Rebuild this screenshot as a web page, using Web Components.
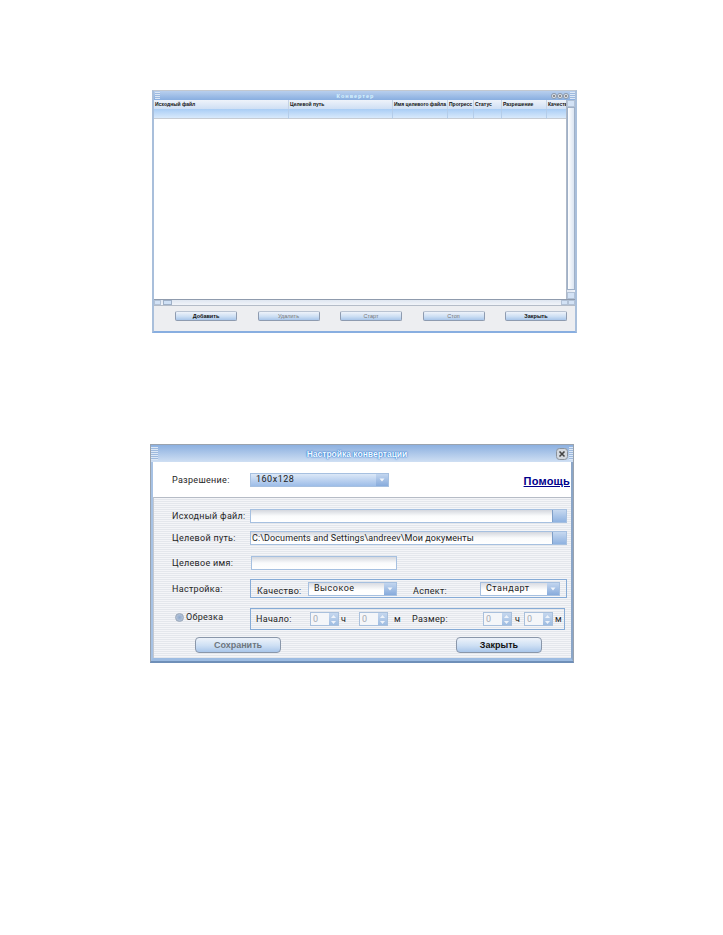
<!DOCTYPE html>
<html lang="ru">
<head>
<meta charset="utf-8">
<title>Настройка конвертации</title>
<style>
    html, body { margin: 0; background: #fff; }
    body { font-family: "Liberation Sans", Arial, sans-serif; color: #222; }
    .page {
        width: 723px;
        height: 935px;
        display: flex;
        flex-direction: column;
        box-sizing: border-box;
        padding-top: 90px;
    }
    .list-wrap { padding-left: 152px; }
    .form-wrap { padding-left: 150px; margin-top: 111px; }
</style>
</head>
<body>
<div class="page">
    <div class="list-wrap">
        <conv-list>
            <conv-button slot="buttons" strong>Добавить</conv-button>
            <conv-button slot="buttons" disabled>Удалить</conv-button>
            <conv-button slot="buttons" disabled>Старт</conv-button>
            <conv-button slot="buttons" disabled>Стоп</conv-button>
            <conv-button slot="buttons" strong>Закрыть</conv-button>
        </conv-list>
    </div>
    <div class="form-wrap">
        <conv-form></conv-form>
    </div>
</div>

<script>
const UI_FONT = `Roboto, "Liberation Sans", sans-serif`;

/** Flat button with a pale blue gradient. Attributes: strong, disabled, big. */
class ConvButton extends HTMLElement {
    constructor() {
        super();
        this.attachShadow({ mode: "open" });
        this.shadowRoot.innerHTML = `
            <style>
                :host {
                    display: flex;
                    align-items: center;
                    justify-content: center;
                    box-sizing: border-box;
                    width: 62px;
                    height: 10px;
                    border: 1px solid #8e9bb0;
                    border-top-color: #b9c3d2;
                    border-radius: 2px;
                    background: linear-gradient(#eef3fa, #cddff4 55%, #a9c6ea);
                    font: bold 5.5px "Liberation Sans", sans-serif;
                    letter-spacing: 0;
                    color: #111;
                }
                :host([disabled]) { font-weight: normal; color: #777; }
                :host([big]) {
                    width: 86px;
                    height: 16px;
                    border-radius: 4px;
                    font-size: 9px;
                    border-color: #8a97aa;
                }
                :host([big][disabled]) { font-weight: bold; color: #6d7680; }
            </style>
            <slot></slot>
        `;
    }
}
customElements.define("conv-button", ConvButton);

/** Small three-button window caption. Attribute: big switches to dialog size. */
class ConvTitlebar extends HTMLElement {
    constructor() {
        super();
        this.attachShadow({ mode: "open" });
        this.shadowRoot.innerHTML = `
            <style>
                :host {
                    display: flex;
                    align-items: center;
                    height: 9px;
                    background: linear-gradient(#b8cfee, #88aee0);
                    color: #d8f3ff;
                    font: bold 5.5px "Liberation Sans", sans-serif;
                    letter-spacing: 1px;
                }
                :host([big]) {
                    height: 17px;
                    background: linear-gradient(#8cb0e0, #cfdff3);
                    font-size: 8.5px;
                    letter-spacing: 0;
                    color: #f2fbff;
                    text-shadow: 0 0 2px #1f6fd0, 0 0 1px #1f6fd0;
                }
                .grip, .end {
                    flex: none;
                    width: 5px;
                    height: 7px;
                    background: repeating-linear-gradient(#dce8f6 0 1px, #9db9de 1px 2px);
                }
                .grip { margin-left: 1px; }
                :host([big]) .grip { width: 7px; height: 13px; margin-left: 0; }
                :host([big]) .end { height: 13px; width: 4px; }
                .title { flex: 1; text-align: center; }
                .icons { display: flex; gap: 1px; padding-right: 1px; align-items: center; }
            </style>
            <div class="grip"></div>
            <div class="title"><slot></slot></div>
            <div class="icons"><slot name="icons"></slot></div>
            <div class="end"></div>
        `;
    }
}
customElements.define("conv-titlebar", ConvTitlebar);

/** The job list window: caption, table, scrollbars, button row. */
class ConvList extends HTMLElement {
    constructor() {
        super();
        this.attachShadow({ mode: "open" });
        const cols = ["Исходный файл", "Целевой путь", "Имя целевого файла", "Прогресс", "Статус", "Разрешение", "Качеств"];
        const head = cols.map(c => `<div class="th">${c}</div>`).join("");
        const sel = cols.map(() => `<div class="td"></div>`).join("");
        const round = `<svg width="6" height="6" viewBox="0 0 6 6" style="display:block"><circle cx="3" cy="3" r="2.6" fill="#d7dde6" stroke="#7d8794" stroke-width=".7"/><path d="M2 2l2 2M4 2L2 4" stroke="#555" stroke-width=".6"/></svg>`;
        this.shadowRoot.innerHTML = `
            <style>
                :host {
                    display: block;
                    box-sizing: border-box;
                    width: 425px;
                    height: 243px;
                    border-top: 1px solid #c2c8d0;
                    border-left: 2px solid #a9bfdb;
                    border-right: 2px solid #a9bfdb;
                    border-bottom: 2px solid #88aee0;
                    background: #fff;
                }
                .body { display: flex; height: 199px; }
                .main { flex: 1; min-width: 0; }
                .row { display: grid; grid-template-columns: 135px 104px 55px 26px 28px 45px 21px; }
                .th {
                    height: 9px;
                    padding-left: 1px;
                    border-right: 1px solid #c5d3e6;
                    background: linear-gradient(#eef3fa, #cfdff4);
                    font: bold 5px/9px "Liberation Sans", sans-serif;
                    color: #111;
                    white-space: nowrap;
                    overflow: hidden;
                }
                .td {
                    height: 10px;
                    border-right: 1px solid #b4cdea;
                    background: linear-gradient(#a9cdf5, #d8e9fb);
                    border-bottom: 1px solid #c7ccd3;
                    box-sizing: border-box;
                }
                .vbar {
                    width: 8px;
                    background: linear-gradient(90deg, #dfe6f1, #f1f4f9);
                    border-left: 1px solid #aeb9c9;
                    display: flex;
                    flex-direction: column;
                    justify-content: space-between;
                }
                .thumb { height: 183px; border: 1px solid #9fb0c7; background: linear-gradient(90deg, #fff, #dbe5f2); box-sizing: border-box; }
                .arrow { height: 7px; background: #d3e2f5; border: 1px solid #b3c2d6; box-sizing: border-box; }
                .hbar {
                    display: flex;
                    height: 7px;
                    align-items: stretch;
                    background: linear-gradient(#dfe6f1, #f1f4f9);
                    border-top: 1px solid #8f9bad;
                    border-bottom: 1px solid #b4bcc8;
                    box-sizing: border-box;
                }
                .hbar .arrow { width: 7px; height: auto; flex: none; }
                .hthumb { width: 9px; margin-left: 2px; background: #cfe0f5; border: 1px solid #9fb0c7; box-sizing: border-box; }
                .spacer { flex: 1; }
                .buttons {
                    display: flex;
                    justify-content: space-between;
                    align-items: flex-start;
                    height: 25px;
                    box-sizing: border-box;
                    padding: 5px 8px 0 21px;
                    background: #edeef1;
                }
            </style>
            <conv-titlebar>
                Конвертер
                <span slot="icons" style="display:flex;gap:0">${round}${round}${round}</span>
            </conv-titlebar>
            <div class="body">
                <div class="main">
                    <div class="row">${head}</div>
                    <div class="row">${sel}</div>
                </div>
                <div class="vbar">
                    <div>
                        <div class="arrow"></div>
                        <div class="thumb"></div>
                    </div>
                    <div class="arrow"></div>
                </div>
            </div>
            <div class="hbar">
                <div class="arrow"></div>
                <div class="hthumb"></div>
                <div class="spacer"></div>
                <div class="arrow"></div>
                <div class="arrow"></div>
            </div>
            <div class="buttons"><slot name="buttons"></slot></div>
        `;
    }
}
customElements.define("conv-list", ConvList);

/** Text field with an optional browse button. Attributes: value, browse. */
class ConvField extends HTMLElement {
    constructor() {
        super();
        this.attachShadow({ mode: "open" });
        const browse = this.hasAttribute("browse") ? `<div class="b"></div>` : "";
        this.shadowRoot.innerHTML = `
            <style>
                :host {
                    display: flex;
                    box-sizing: border-box;
                    height: 14px;
                    border: 1px solid #a6c0e0;
                    background: linear-gradient(#d4d7de, #fafbfc 50%, #fff);
                    font: 9px/12px ${UI_FONT};
                    color: #222;
                    letter-spacing: .1px;
                }
                .v { flex: 1; padding-left: 1px; white-space: nowrap; overflow: hidden; }
                .b { width: 13px; background: linear-gradient(#c7d9f0, #8fb2e0); border-left: 1px solid #7f9fc8; }
            </style>
            <div class="v">${this.getAttribute("value") || ""}</div>${browse}
        `;
    }
}
customElements.define("conv-field", ConvField);

/** Dropdown. Attributes: value, fill (blue background). */
class ConvCombo extends HTMLElement {
    constructor() {
        super();
        this.attachShadow({ mode: "open" });
        this.shadowRoot.innerHTML = `
            <style>
                :host {
                    display: flex;
                    box-sizing: border-box;
                    height: 14px;
                    border: 1px solid #a6c0e0;
                    background: linear-gradient(#d8dbe2, #fff 60%);
                    font: 9px/11px ${UI_FONT};
                    letter-spacing: .5px;
                    color: #222;
                }
                :host([fill]) { background: linear-gradient(#dce8f7, #9dbde8); }
                .v { flex: 1; padding-left: 5px; white-space: nowrap; overflow: hidden; }
                .b {
                    width: 12px;
                    display: flex;
                    align-items: center;
                    justify-content: center;
                    background: linear-gradient(#c3d6ef, #87abdc);
                }
                svg { display: block; }
            </style>
            <div class="v">${this.getAttribute("value") || ""}</div>
            <div class="b"><svg width="6" height="4" viewBox="0 0 6 4"><path d="M0.5 0.5h5L3 3.5z" fill="#f2f6fb"/></svg></div>
        `;
    }
}
customElements.define("conv-combo", ConvCombo);

/** Spin box with up/down arrows. Attribute: value. */
class ConvSpin extends HTMLElement {
    constructor() {
        super();
        this.attachShadow({ mode: "open" });
        this.shadowRoot.innerHTML = `
            <style>
                :host {
                    display: flex;
                    box-sizing: border-box;
                    width: 29px;
                    height: 14px;
                    border: 1px solid #a9c0dc;
                    background: #f4f6f9;
                    font: 9px/12px ${UI_FONT};
                    color: #a5abb3;
                }
                .v { flex: 1; padding-left: 2px; }
                .b {
                    width: 9px;
                    display: flex;
                    flex-direction: column;
                    justify-content: space-around;
                    align-items: center;
                    background: linear-gradient(#c5d7ee, #9fbde2);
                }
                svg { display: block; }
            </style>
            <div class="v">${this.getAttribute("value") || "0"}</div>
            <div class="b">
                <svg width="5" height="3" viewBox="0 0 5 3"><path d="M0 3h5L2.5 0z" fill="#eef3fa"/></svg>
                <svg width="5" height="3" viewBox="0 0 5 3"><path d="M0 0h5L2.5 3z" fill="#eef3fa"/></svg>
            </div>
        `;
    }
}
customElements.define("conv-spin", ConvSpin);

/** Outlined row that holds the quality and trim controls. */
class ConvGroup extends HTMLElement {
    constructor() {
        super();
        this.attachShadow({ mode: "open" });
        this.shadowRoot.innerHTML = `
            <style>
                :host {
                    display: flex;
                    align-items: center;
                    box-sizing: border-box;
                    border: 1px solid #86abd6;
                }
            </style>
            <slot></slot>
        `;
    }
}
customElements.define("conv-group", ConvGroup);

/** The conversion settings dialog. */
class ConvForm extends HTMLElement {
    constructor() {
        super();
        this.attachShadow({ mode: "open" });
        this.shadowRoot.innerHTML = `
            <style>
                :host {
                    display: block;
                    box-sizing: border-box;
                    width: 424px;
                    height: 219px;
                    border: 1px solid #9aa3ae;
                    border-bottom: 2px solid #6f8fb8;
                    background: #fff;
                    font: 9px ${UI_FONT};
                    letter-spacing: .3px;
                    color: #262626;
                }
                .frame {
                    box-sizing: border-box;
                    height: 199px;
                    border-left: 2px solid #a7c2e4;
                    border-right: 2px solid #8ba6c8;
                    border-bottom: 3px solid #9dbce2;
                    display: flex;
                    flex-direction: column;
                }
                .top { display: flex; align-items: center; height: 35px; flex: none; box-sizing: border-box; padding: 0 1px 0 18px; }
                .help { margin-left: auto; font: bold 11px "Liberation Sans", sans-serif; letter-spacing: .2px; color: #00008b; text-decoration: underline; margin-top: 2px; }
                .panel {
                    flex: 1;
                    box-sizing: border-box;
                    padding: 11px 4px 0 18px;
                    border-top: 1px solid #b6bcc6;
                    border-left: 1px solid #c3c8d0;
                    background: repeating-linear-gradient(#f4f5f8 0 1px, #e4e7ec 1px 2px);
                    display: flex;
                    flex-direction: column;
                }
                .row { display: flex; align-items: center; height: 14px; flex: none; }
                .label { width: 78px; flex: none; }
                .lift { margin-top: -1px; }
                .grow { flex: 1; }
                .r2 { margin-top: 8px; }
                .r3 { margin-top: 11px; }
                .r4 { margin-top: 9px; height: 19px; }
                .r5 { margin-top: 10px; height: 22px; }
                .r6 { margin-top: 7px; height: 16px; padding: 0 25px 0 23px; justify-content: space-between; }
                .radio { display: flex; align-items: center; gap: 2px; width: 78px; padding-left: 3px; box-sizing: border-box; flex: none; margin-top: -4px; }
                .dot { width: 9px; height: 9px; border-radius: 50%; border: 1px solid #9aa7b8; background: radial-gradient(#8fa9cc, #c3cfdf); box-sizing: border-box; }
            </style>
            <conv-titlebar big>
                Настройка конвертации
                <svg slot="icons" width="12" height="12" viewBox="0 0 12 12" style="display:block"><rect x=".5" y=".5" width="11" height="11" rx="3" fill="#d3d8df" stroke="#8a929c"/><path d="M3.5 3.5l5 5M8.5 3.5l-5 5" stroke="#444" stroke-width="1.6"/></svg>
            </conv-titlebar>
            <div class="frame">
                <div class="top">
                    <div class="label" style="width:79px;padding-left:1px;box-sizing:border-box">Разрешение:</div>
                    <conv-combo fill value="160x128" style="width:139px"></conv-combo>
                    <div class="help">Помощь</div>
                </div>
                <div class="panel">
                    <div class="row">
                        <div class="label lift">Исходный файл:</div>
                        <conv-field class="grow" browse></conv-field>
                    </div>
                    <div class="row r2">
                        <div class="label lift">Целевой путь:</div>
                        <conv-field class="grow" browse value="C:\\Documents and Settings\\andreev\\Мои документы"></conv-field>
                    </div>
                    <div class="row r3">
                        <div class="label">Целевое имя:</div>
                        <conv-field style="width:146px;margin-left:1px"></conv-field>
                    </div>
                    <div class="row r4">
                        <div class="label">Настройка:</div>
                        <conv-group class="grow" style="height:19px">
                            <span style="margin:5px 0 0 6px;width:51px">Качество:</span>
                            <conv-combo value="Высокое" style="width:89px"></conv-combo>
                            <span style="margin:5px 0 0 16px;width:67px">Аспект:</span>
                            <conv-combo value="Стандарт" style="width:80px"></conv-combo>
                        </conv-group>
                    </div>
                    <div class="row r5">
                        <div class="radio"><div class="dot"></div><span>Обрезка</span></div>
                        <conv-group style="height:22px;width:315px">
                            <span style="margin-left:5px;width:54px">Начало:</span>
                            <conv-spin></conv-spin>
                            <span style="width:20px;padding-left:2px;box-sizing:border-box">ч</span>
                            <conv-spin></conv-spin>
                            <span style="width:19px;padding-left:6px;box-sizing:border-box;margin-right:5px">м</span>
                            <span style="width:71px">Размер:</span>
                            <conv-spin></conv-spin>
                            <span style="width:12px;padding-left:3px;box-sizing:border-box">ч</span>
                            <conv-spin></conv-spin>
                            <span style="padding-left:2px">м</span>
                        </conv-group>
                    </div>
                    <div class="row r6">
                        <conv-button big disabled>Сохранить</conv-button>
                        <conv-button big strong>Закрыть</conv-button>
                    </div>
                </div>
            </div>
        `;
    }
}
customElements.define("conv-form", ConvForm);
</script>
</body>
</html>
